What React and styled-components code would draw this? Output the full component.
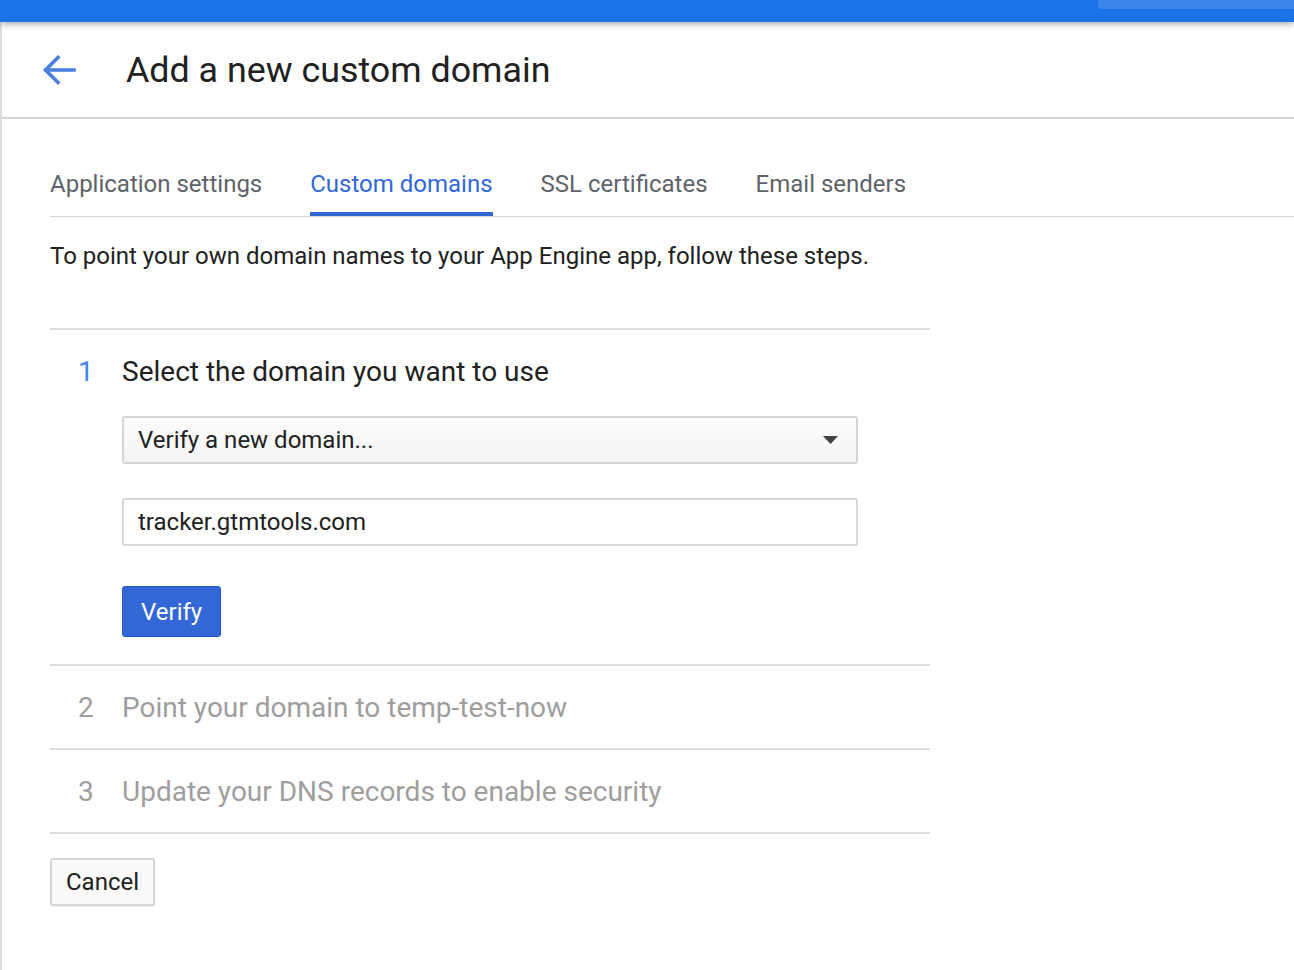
import React from "react";
import styled, { createGlobalStyle } from "styled-components";

const GlobalStyle = createGlobalStyle`
  html, body {
    margin: 0;
    padding: 0;
    background: #ffffff;
  }
  body {
    font-family: Roboto, "Liberation Sans", Arial, sans-serif;
    color: #212121;
  }
  * {
    box-sizing: border-box;
  }
`;

const TopBar = styled.div`
  position: relative;
  z-index: 2;
  height: 22px;
  background-color: #1a73e8;
  display: flex;
  justify-content: flex-end;
  align-items: flex-start;
  box-shadow: 0 2px 7px rgba(0, 0, 0, 0.35);
`;

const TopBarTab = styled.div`
  width: 196px;
  height: 9px;
  background-color: #3d84ea;
  border-bottom-left-radius: 3px;
`;

const Page = styled.div`
  min-height: calc(100vh - 22px);
  border-left: 2px solid #dcdcdc;
`;

const Header = styled.header`
  height: 97px;
  display: flex;
  align-items: center;
  border-bottom: 2px solid #d3d3d3;
  padding-left: 39px;
`;

const BackButton = styled.button`
  background: none;
  border: none;
  padding: 0;
  margin: 0;
  width: 36px;
  height: 36px;
  display: flex;
  align-items: center;
  justify-content: center;
  cursor: pointer;
`;

const Title = styled.h1`
  margin: 0 0 0 49px;
  font-size: 35.8px;
  font-weight: 400;
  color: #212121;
`;

const Content = styled.main`
  padding-left: 48px;
`;

const TabBar = styled.nav`
  margin-top: 40px;
  display: flex;
  gap: 48px;
  border-bottom: 1px solid #d6d6d6;
`;

const Tab = styled.div`
  line-height: 50px;
  padding-bottom: 3px;
  font-size: 24px;
  color: ${(props) => (props.active ? "#3367d6" : "#5f6368")};
  border-bottom: 4px solid
    ${(props) => (props.active ? "#3367d6" : "transparent")};
  cursor: pointer;
`;

const Intro = styled.p`
  margin: 24px 0 0;
  font-size: 24px;
  line-height: 30px;
  color: #212121;
`;

const Steps = styled.div`
  width: 880px;
  margin-top: 57px;
  border-bottom: 2px solid #dcdcdc;
`;

const Step = styled.section`
  border-top: 2px solid #dcdcdc;
  padding-bottom: ${(props) => (props.open ? "27px" : "0")};
`;

const StepHeader = styled.div`
  display: flex;
  align-items: center;
  height: 82px;
  padding-left: 28px;
  font-size: 28px;
  color: ${(props) => (props.open ? "#212121" : "#9e9e9e")};
`;

const StepNumber = styled.span`
  width: 44px;
  color: ${(props) => (props.open ? "#4285f4" : "#9e9e9e")};
`;

const StepBody = styled.div`
  padding-left: 72px;
  padding-top: 4px;
  display: flex;
  flex-direction: column;
  align-items: flex-start;
`;

const Select = styled.div`
  width: 736px;
  height: 48px;
  display: flex;
  align-items: center;
  justify-content: space-between;
  padding: 0 18px 0 14px;
  font-size: 24px;
  color: #212121;
  border: 2px solid #d6d6d6;
  border-radius: 3px;
  background: linear-gradient(#fdfdfd, #f4f4f4);
`;

const Input = styled.input`
  margin-top: 34px;
  width: 736px;
  height: 48px;
  padding: 0 14px;
  font-family: inherit;
  font-size: 24px;
  color: #212121;
  border: 2px solid #d9d9d9;
  border-radius: 2px;
  outline: none;
  background: #ffffff;
`;

const PrimaryButton = styled.button`
  margin-top: 40px;
  height: 51px;
  padding: 0 18px;
  font-family: inherit;
  font-size: 24px;
  color: #ffffff;
  background-color: #3367d6;
  border: 1px solid #2a56c6;
  border-radius: 3px;
  cursor: pointer;
`;

const SecondaryButton = styled.button`
  margin-top: 24px;
  height: 48px;
  padding: 0 14px;
  font-family: inherit;
  font-size: 24px;
  color: #212121;
  background-color: #fafafa;
  border: 2px solid #d6d6d6;
  border-radius: 3px;
  box-shadow: 0 1px 1px rgba(0, 0, 0, 0.06);
  cursor: pointer;
`;

const BackArrow = () => (
  <svg width="34" height="32" viewBox="0 0 34 32" fill="none">
    <path
      d="M32 16H4M16 3.5L3.5 16L16 28.5"
      stroke="#4a7fe0"
      strokeWidth="3.6"
      strokeLinecap="square"
    />
  </svg>
);

const Caret = () => (
  <svg width="15" height="8" viewBox="0 0 15 8">
    <path d="M0 0h15L7.5 8z" fill="#424242" />
  </svg>
);

const tabs = [
  "Application settings",
  "Custom domains",
  "SSL certificates",
  "Email senders",
];

const App = () => {
  return (
    <>
      <GlobalStyle />
      <TopBar>
        <TopBarTab />
      </TopBar>
      <Page>
        <Header>
          <BackButton aria-label="Back">
            <BackArrow />
          </BackButton>
          <Title>Add a new custom domain</Title>
        </Header>

        <Content>
          <TabBar>
            {tabs.map((tab) => (
              <Tab key={tab} active={tab === "Custom domains"}>
                {tab}
              </Tab>
            ))}
          </TabBar>

          <Intro>
            To point your own domain names to your App Engine app, follow these
            steps.
          </Intro>

          <Steps>
            <Step open>
              <StepHeader open>
                <StepNumber open>1</StepNumber>
                Select the domain you want to use
              </StepHeader>
              <StepBody>
                <Select>
                  Verify a new domain...
                  <Caret />
                </Select>
                <Input defaultValue="tracker.gtmtools.com" />
                <PrimaryButton>Verify</PrimaryButton>
              </StepBody>
            </Step>
            <Step>
              <StepHeader>
                <StepNumber>2</StepNumber>
                Point your domain to temp-test-now
              </StepHeader>
            </Step>
            <Step>
              <StepHeader>
                <StepNumber>3</StepNumber>
                Update your DNS records to enable security
              </StepHeader>
            </Step>
          </Steps>

          <SecondaryButton>Cancel</SecondaryButton>
        </Content>
      </Page>
    </>
  );
};

export default App;
